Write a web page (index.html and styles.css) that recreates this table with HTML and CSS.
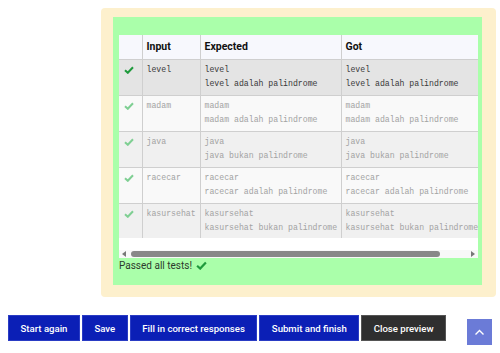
FILE: index.html
```html
<!DOCTYPE html>
<html>
<head>
<meta charset="utf-8">
<link rel="stylesheet" href="styles.css">
</head>
<body>
<div class="outcome">
  <div class="results">
    <div class="scroller">
      <div class="clip">
        <table class="tests">
          <thead>
            <tr><th class="c0"></th><th class="c1">Input</th><th class="c2">Expected</th><th class="c3">Got</th></tr>
          </thead>
          <tbody>
            <tr class="r1">
              <td class="chk"><svg width="10" height="8" viewBox="0 0 10 8"><path d="M1 4.2 L3.8 6.8 L9 1.2" fill="none" stroke="#1f9a3c" stroke-width="2"/></svg></td>
              <td>level</td>
              <td>level<br>level adalah palindrome</td>
              <td>level<br>level adalah palindrome</td>
            </tr>
            <tr class="dim odd">
              <td class="chk"><svg width="10" height="8" viewBox="0 0 10 8"><path d="M1 4.2 L3.8 6.8 L9 1.2" fill="none" stroke="#7fcf93" stroke-width="2"/></svg></td>
              <td>madam</td>
              <td>madam<br>madam adalah palindrome</td>
              <td>madam<br>madam adalah palindrome</td>
            </tr>
            <tr class="dim even">
              <td class="chk"><svg width="10" height="8" viewBox="0 0 10 8"><path d="M1 4.2 L3.8 6.8 L9 1.2" fill="none" stroke="#7fcf93" stroke-width="2"/></svg></td>
              <td>java</td>
              <td>java<br>java bukan palindrome</td>
              <td>java<br>java bukan palindrome</td>
            </tr>
            <tr class="dim odd">
              <td class="chk"><svg width="10" height="8" viewBox="0 0 10 8"><path d="M1 4.2 L3.8 6.8 L9 1.2" fill="none" stroke="#7fcf93" stroke-width="2"/></svg></td>
              <td>racecar</td>
              <td>racecar<br>racecar adalah palindrome</td>
              <td>racecar<br>racecar adalah palindrome</td>
            </tr>
            <tr class="dim even">
              <td class="chk"><svg width="10" height="8" viewBox="0 0 10 8"><path d="M1 4.2 L3.8 6.8 L9 1.2" fill="none" stroke="#7fcf93" stroke-width="2"/></svg></td>
              <td>kasursehat</td>
              <td>kasursehat<br>kasursehat bukan palindrome</td>
              <td>kasursehat<br>kasursehat bukan palindrome</td>
            </tr>
          </tbody>
        </table>
      </div>
      <div class="scrollbar">
        <span class="arrow left"></span>
        <span class="thumb"></span>
        <span class="arrow right"></span>
      </div>
    </div>
    <p class="passed">Passed all tests! <svg width="11" height="9" viewBox="0 0 10 8"><path d="M1 4.2 L3.8 6.8 L9 1.2" fill="none" stroke="#1f9a3c" stroke-width="2"/></svg></p>
  </div>
</div>
<div class="buttons">
  <button class="btn">Start again</button>
  <button class="btn">Save</button>
  <button class="btn">Fill in correct responses</button>
  <button class="btn">Submit and finish</button>
  <button class="btn dark">Close preview</button>
</div>
<a class="totop"><svg width="11" height="7" viewBox="0 0 11 7"><path d="M1.5 5.5 L5.5 1.5 L9.5 5.5" fill="none" stroke="#fff" stroke-width="1.4"/></svg></a>
</body>
</html>
```

FILE: styles.css
```css
html, body {
  margin: 0;
  padding: 0;
  background: #fff;
  font-family: Roboto, "Liberation Sans", sans-serif;
}
.outcome {
  margin: 8px 4px 0 101px;
  height: 289px;
  box-sizing: border-box;
  background: #fdf0cd;
  border-radius: 4px;
  padding: 9px 14px 0 12px;
}
.results {
  background: #aaffaa;
  height: 268px;
  box-sizing: border-box;
  padding: 18px 4px 0 6px;
}
.scroller {
  background: #fff;
  height: 223px;
  display: flex;
  flex-direction: column;
}
.clip {
  overflow: hidden;
  height: 203px;
}
.tests {
  border-collapse: collapse;
  width: 400px;
  table-layout: fixed;
}
.tests th, .tests td {
  border: 1px solid #cfcfcf;
  text-align: left;
  vertical-align: top;
}
.tests tr > :first-child { border-left: none; }
.tests thead tr > * { border-top: none; }
.tests th {
  background: #f7f8fd;
  height: 24px;
  box-sizing: border-box;
  padding: 0 4px;
  vertical-align: middle;
  font-size: 10.5px;
  font-weight: bold;
  color: #111;
}
.c0 { width: 23px; }
.c1 { width: 58px; }
.c2 { width: 141px; }
.c3 { width: 178px; }
.tests td {
  font-family: "Liberation Mono", "Courier New", monospace;
  font-size: 8.2px;
  line-height: 14px;
  padding: 3px 4px 4px;
  height: 35px;
  box-sizing: border-box;
  white-space: nowrap;
  color: #3a3a3a;
}
.tests td.chk {
  padding: 5px 0 0 5px;
}
.r1 td { background: #e4e4e4; }
.dim td { color: #a3a3a3; }
.odd td { background: #f9f9f9; }
.even td { background: #f0f0f0; }
.scrollbar {
  margin-top: auto;
  height: 8px;
  background: #f8f8f8;
  display: flex;
  align-items: center;
  padding: 0 3px;
}
.arrow {
  width: 0;
  height: 0;
  border-top: 3px solid transparent;
  border-bottom: 3px solid transparent;
}
.arrow.left { border-right: 4px solid #777; }
.arrow.right { border-left: 4px solid #777; margin-left: auto; }
.thumb {
  margin-left: 5px;
  width: 309px;
  height: 6px;
  border-radius: 3px;
  background: #888;
}
.passed {
  margin: 2px 0 0 0;
  font-size: 10px;
  color: #2d3a2d;
  display: flex;
  align-items: center;
  gap: 4px;
}
.buttons {
  display: flex;
  gap: 2px;
  margin: 18px 0 0 8px;
}
.btn {
  height: 26px;
  padding: 0 11.5px;
  border: 1px solid #2a3cc4;
  background: #0b1fb6;
  color: #fff;
  font-family: Roboto, "Liberation Sans", sans-serif;
  font-size: 9.6px;
  font-weight: 500;
}
.btn.dark {
  background: #2f2f2f;
  border-color: #555;
}
.totop {
  position: fixed;
  right: 8px;
  bottom: 8px;
  width: 25px;
  height: 26px;
  background: #6b7bd7;
  display: flex;
  align-items: center;
  justify-content: center;
}
```
